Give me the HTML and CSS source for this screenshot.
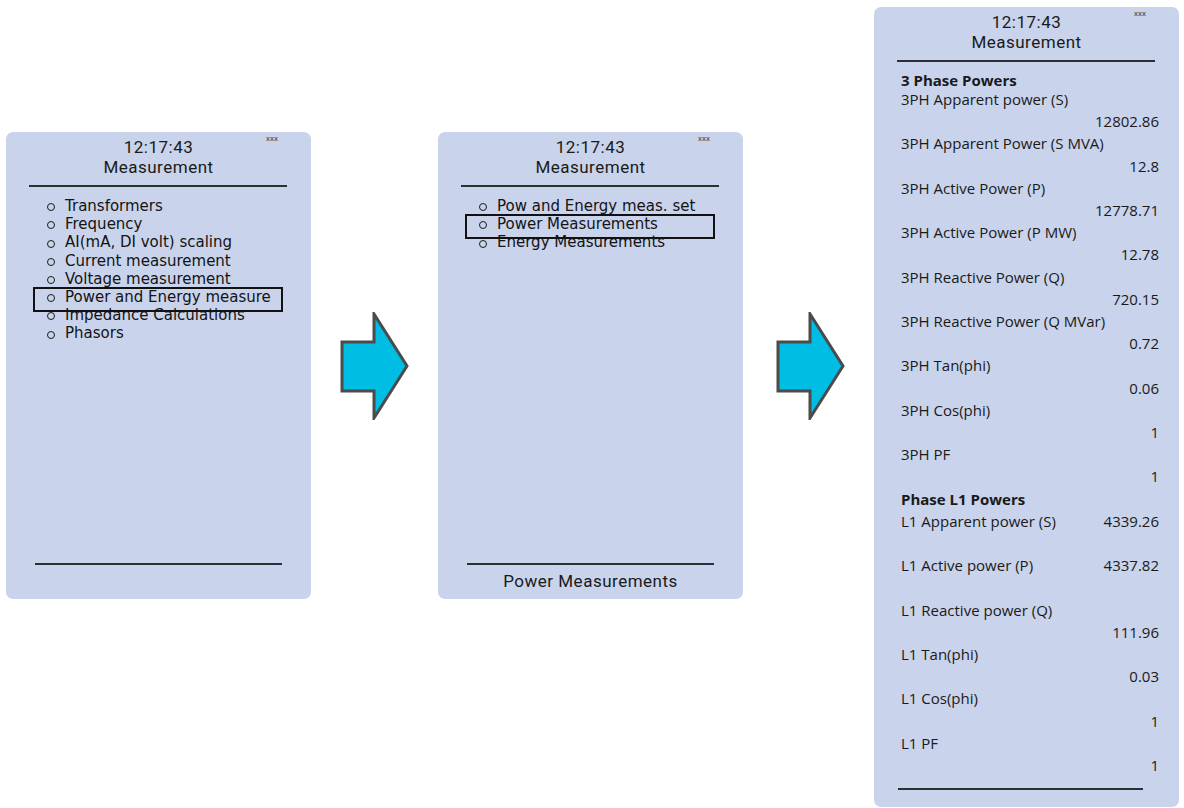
FILE: index.html
```html
<!DOCTYPE html>
<html lang="en">
<head>
  <meta charset="UTF-8" />
  <meta name="viewport" content="width=device-width, initial-scale=1" />
  <title>Measurement - LHMI navigation</title>
  <link rel="stylesheet" href="styles.css">
</head>
<body>
  <div class="stage">

    <!-- Screen 1: measurement menu -->
    <section class="screen screen-menu">
      <header class="screen-head">
        <span class="clock">12:17:43</span>
        <span class="title">Measurement</span>
        <span class="tag">xxx</span>
      </header>
      <hr class="rule">
      <ul class="menu">
        <li>Transformers</li>
        <li>Frequency</li>
        <li>AI(mA, DI volt) scaling</li>
        <li>Current measurement</li>
        <li>Voltage measurement</li>
        <li class="selected">Power and Energy measure</li>
        <li>Impedance Calculations</li>
        <li>Phasors</li>
      </ul>
      <footer class="screen-foot">
        <hr class="rule">
        <span class="foot-text"></span>
      </footer>
    </section>

    <svg class="arrow" width="69" height="108" viewBox="0 0 69 108">
      <polygon points="2,30 34,30 34,2 67,54 34,106 34,79 2,79" />
    </svg>

    <!-- Screen 2: power and energy submenu -->
    <section class="screen screen-menu">
      <header class="screen-head">
        <span class="clock">12:17:43</span>
        <span class="title">Measurement</span>
        <span class="tag">xxx</span>
      </header>
      <hr class="rule">
      <ul class="menu">
        <li>Pow and Energy meas. set</li>
        <li class="selected">Power Measurements</li>
        <li>Energy Measurements</li>
      </ul>
      <footer class="screen-foot">
        <hr class="rule">
        <span class="foot-text">Power Measurements</span>
      </footer>
    </section>

    <svg class="arrow arrow-second" width="69" height="108" viewBox="0 0 69 108">
      <polygon points="2,30 34,30 34,2 67,54 34,106 34,79 2,79" />
    </svg>

    <!-- Screen 3: power measurement values -->
    <section class="screen screen-detail">
      <header class="screen-head">
        <span class="clock">12:17:43</span>
        <span class="title">Measurement</span>
        <span class="tag">xxx</span>
      </header>
      <hr class="rule">
      <div class="detail-body">
        <div class="group-title">3 Phase Powers</div>
        <div class="reading"><span>3PH Apparent power (S)</span><span class="value">12802.86</span></div>
        <div class="reading"><span>3PH Apparent Power (S MVA)</span><span class="value">12.8</span></div>
        <div class="reading"><span>3PH Active Power (P)</span><span class="value">12778.71</span></div>
        <div class="reading"><span>3PH Active Power (P MW)</span><span class="value">12.78</span></div>
        <div class="reading"><span>3PH Reactive Power (Q)</span><span class="value">720.15</span></div>
        <div class="reading"><span>3PH Reactive Power (Q MVar)</span><span class="value">0.72</span></div>
        <div class="reading"><span>3PH Tan(phi)</span><span class="value">0.06</span></div>
        <div class="reading"><span>3PH Cos(phi)</span><span class="value">1</span></div>
        <div class="reading"><span>3PH PF</span><span class="value">1</span></div>

        <div class="group-title">Phase L1 Powers</div>
        <div class="reading inline"><span>L1 Apparent power (S)</span><span class="value">4339.26</span></div>
        <div class="reading inline"><span>L1 Active power (P)</span><span class="value">4337.82</span></div>
        <div class="reading"><span>L1 Reactive power (Q)</span><span class="value">111.96</span></div>
        <div class="reading"><span>L1 Tan(phi)</span><span class="value">0.03</span></div>
        <div class="reading"><span>L1 Cos(phi)</span><span class="value">1</span></div>
        <div class="reading"><span>L1 PF</span><span class="value">1</span></div>
      </div>
      <footer class="screen-foot short">
        <hr class="rule">
      </footer>
    </section>

  </div>
</body>
</html>
```

FILE: styles.css
```css
:root {
  --screen-bg: #c9d3eb;
  --ink: #1a1a1a;
  --rule: #2d2f34;
  --arrow-fill: #00bde3;
  --arrow-edge: #4b4b4b;
}

* {
  box-sizing: border-box;
}

body {
  margin: 0;
  background: #ffffff;
  color: var(--ink);
  font-family: 'Open Sans', 'Noto Sans', sans-serif;
  overflow: hidden;
}

.stage {
  display: flex;
  align-items: flex-start;
  padding-left: 6px;
}

.screen {
  position: relative;
  width: 305px;
  background: var(--screen-bg);
  border-radius: 7px;
  display: flex;
  flex-direction: column;
  flex-shrink: 0;
}

.screen-menu {
  height: 467px;
  margin-top: 132px;
}

.screen-detail {
  height: 800px;
  margin-top: 7px;
}

.screen-head {
  position: relative;
  padding-top: 5px;
  display: flex;
  flex-direction: column;
  align-items: center;
  font-family: Roboto, 'Open Sans', sans-serif;
  font-size: 17px;
  line-height: 20px;
  letter-spacing: 0.5px;
}

.screen-head .tag {
  position: absolute;
  top: 2px;
  right: 33px;
  font-size: 8px;
  line-height: 9px;
  letter-spacing: 0;
  color: #3a3a3a;
}

.rule {
  border: none;
  height: 2px;
  background: var(--rule);
  margin: 8px 24px 0 23px;
}

/* menu lists */

.menu {
  list-style: none;
  margin: 10px 0 0;
  padding: 0 40px 0 41px;
  font-family: 'DejaVu Sans', Verdana, sans-serif;
  font-size: 15px;
  line-height: 18.2px;
  color: #141414;
}

.menu li {
  position: relative;
  display: flex;
  align-items: center;
  gap: 10px;
  white-space: nowrap;
}

.menu li::before {
  content: "";
  width: 6px;
  height: 6px;
  border: 1.7px solid #1a1a1a;
  border-radius: 50%;
  flex-shrink: 0;
  margin-top: 2px;
}

.menu li.selected::after {
  content: "";
  position: absolute;
  left: -14px;
  top: -1px;
  width: 246px;
  height: 21px;
  border: 2px solid #111;
}

/* footer */

.screen-foot {
  margin-top: auto;
  height: 36px;
  display: flex;
  flex-direction: column;
}

.screen-foot .rule {
  margin: 0 29px;
}

.foot-text {
  margin-top: 6px;
  text-align: center;
  font-family: Roboto, 'Open Sans', sans-serif;
  font-size: 17px;
  line-height: 20px;
  letter-spacing: 0.5px;
}

.screen-foot.short {
  height: 19px;
}

.screen-foot.short .rule {
  margin: 0 36px 0 24px;
}

/* value list */

.detail-body {
  padding: 10px 20px 0 27px;
  font-size: 15px;
  line-height: 22.2px;
}

.group-title {
  font-weight: 700;
}

.detail-body > .group-title:first-child {
  line-height: 16px;
}

.reading {
  display: flex;
  flex-direction: column;
  white-space: nowrap;
}

.reading .value {
  text-align: right;
}

.reading.inline {
  flex-direction: row;
  justify-content: space-between;
  height: 44.4px;
}

/* arrows between screens */

.arrow {
  flex-shrink: 0;
  margin: 312px 29px 0;
}

.arrow-second {
  margin-left: 33px;
}

.arrow polygon {
  fill: var(--arrow-fill);
  stroke: var(--arrow-edge);
  stroke-width: 3;
  stroke-linejoin: miter;
}
```
